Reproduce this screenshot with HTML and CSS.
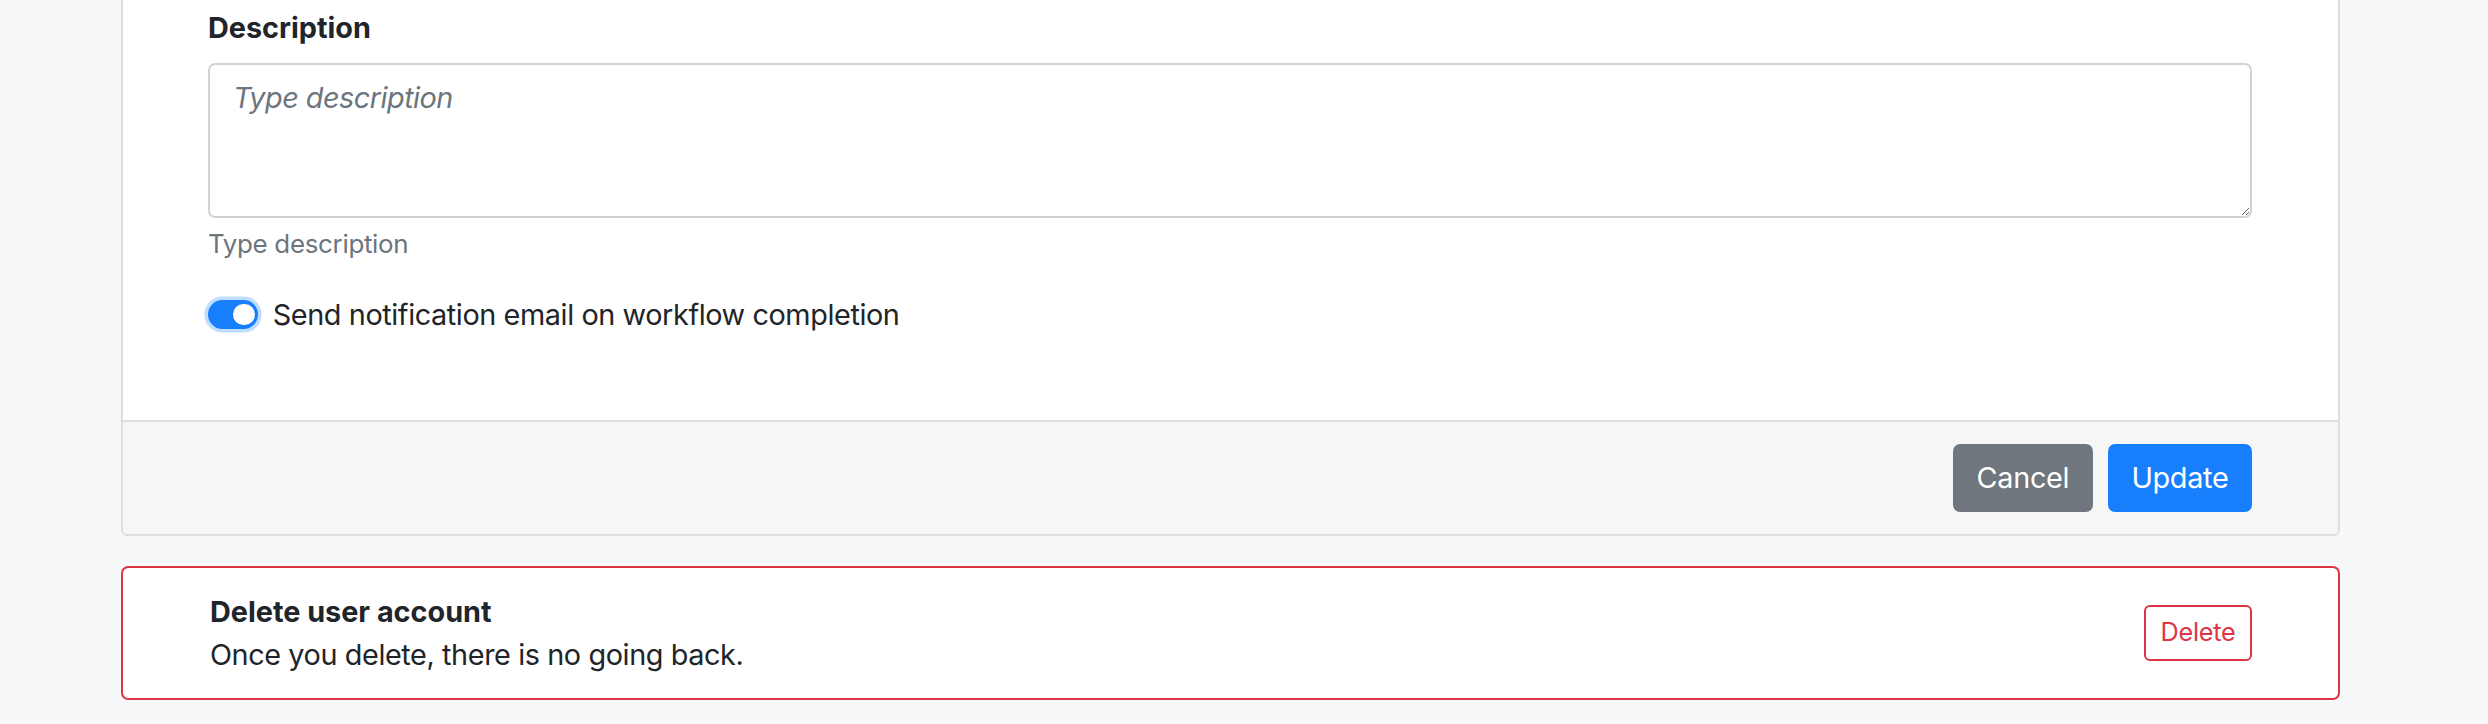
FILE: index.html
```html
<!DOCTYPE html>
<html lang="en">
<head>
<meta charset="utf-8">
<title>Workflow settings</title>
<link rel="stylesheet" href="styles.css">
</head>
<body>
<main class="page">
  <section class="card">
    <div class="card-body">
      <div class="form-group">
        <label class="field-label" for="desc">Description</label>
        <textarea id="desc" class="form-control" rows="3" placeholder="Type description"></textarea>
        <small class="form-text">Type description</small>
      </div>
      <div class="switch-row">
        <span class="switch" role="switch" aria-checked="true"><span class="knob"></span></span>
        <span class="switch-label">Send notification email on workflow completion</span>
      </div>
    </div>
    <div class="card-footer">
      <button class="btn btn-secondary" type="button">Cancel</button>
      <button class="btn btn-primary" type="button">Update</button>
    </div>
  </section>

  <section class="danger-card">
    <div class="danger-text">
      <div class="danger-title">Delete user account</div>
      <div class="danger-desc">Once you delete, there is no going back.</div>
    </div>
    <button class="btn-outline-danger" type="button">Delete</button>
  </section>
</main>
</body>
</html>
```

FILE: styles.css
```css
* { box-sizing: border-box; }

html, body {
  margin: 0;
  padding: 0;
  background: #f7f8fa;
}

body {
  font-family: Inter, "Liberation Sans", Arial, sans-serif;
  font-size: 28.8px;
  line-height: 1.5;
  color: #212529;
  letter-spacing: -0.4px;
}

.page {
  width: 2219px;
  margin-left: 121px;
  display: flex;
  flex-direction: column;
  gap: 30px;
}

.card {
  background: #fff;
  border: 2px solid #dedede;
  border-top: 0;
  border-radius: 0 0 6px 6px;
  display: flex;
  flex-direction: column;
}

.card-body {
  padding: 6px 86px 84px 85px;
}

.form-group {
  display: flex;
  flex-direction: column;
  margin-bottom: 29px;
}

.field-label {
  font-weight: 700;
  letter-spacing: 0;
  margin-bottom: 14px;
}

.form-control {
  display: block;
  width: 100%;
  height: 154.8px;
  padding: 10.8px 22px 10.8px 23px;
  font-family: inherit;
  font-size: 28.8px;
  line-height: 1.5;
  letter-spacing: -0.5px;
  color: #495057;
  background: #fff;
  border: 2px solid #cfd3d8;
  border-radius: 7.2px;
  resize: vertical;
  outline: none;
}

.form-control::placeholder {
  color: #6c757d;
  font-style: italic;
  opacity: 1;
}

.form-text {
  margin-top: 7px;
  font-size: 25.9px;
  line-height: 1.5;
  letter-spacing: -0.3px;
  color: #6c757d;
}

.switch-row {
  display: flex;
  align-items: flex-start;
  gap: 14.4px;
}

.switch {
  flex: none;
  margin-top: 7.2px;
  width: 50.4px;
  height: 28.8px;
  border-radius: 14.4px;
  background: #187ffc;
  border: 2px solid #187ffc;
  box-shadow: 0 0 0 3.6px rgba(0, 123, 255, 0.25);
  display: flex;
  align-items: center;
  justify-content: flex-end;
  padding-right: 1.6px;
}

.knob {
  width: 21.6px;
  height: 21.6px;
  border-radius: 50%;
  background: #fff;
}

.card-footer {
  display: flex;
  justify-content: flex-end;
  gap: 15px;
  padding: 21.6px 86px 21.6px 86px;
  background: #f6f6f6;
  border-top: 2px solid #dedede;
  border-radius: 0 0 4px 4px;
}

.btn {
  font-family: inherit;
  font-size: 28.8px;
  line-height: 1.5;
  letter-spacing: -0.3px;
  padding: 10.8px 21.6px;
  border: 2px solid transparent;
  border-radius: 7.2px;
  color: #fff;
  cursor: pointer;
}

.btn-secondary {
  background: #6f767d;
  border-color: #6f767d;
}

.btn-primary {
  background: #187ffc;
  border-color: #187ffc;
}

.danger-card {
  background: #fff;
  border: 2px solid #dc3545;
  border-radius: 7.2px;
  padding: 21.6px 86px 21.6px 87px;
  display: flex;
  align-items: center;
  justify-content: space-between;
}

.danger-title {
  font-weight: 700;
  letter-spacing: 0;
}

.btn-outline-danger {
  font-family: inherit;
  font-size: 25.2px;
  line-height: 1.5;
  letter-spacing: -0.2px;
  padding: 7.2px 14.4px;
  color: #dc3545;
  background: #fff;
  border: 2px solid #dc3545;
  border-radius: 5.8px;
  cursor: pointer;
}
```
